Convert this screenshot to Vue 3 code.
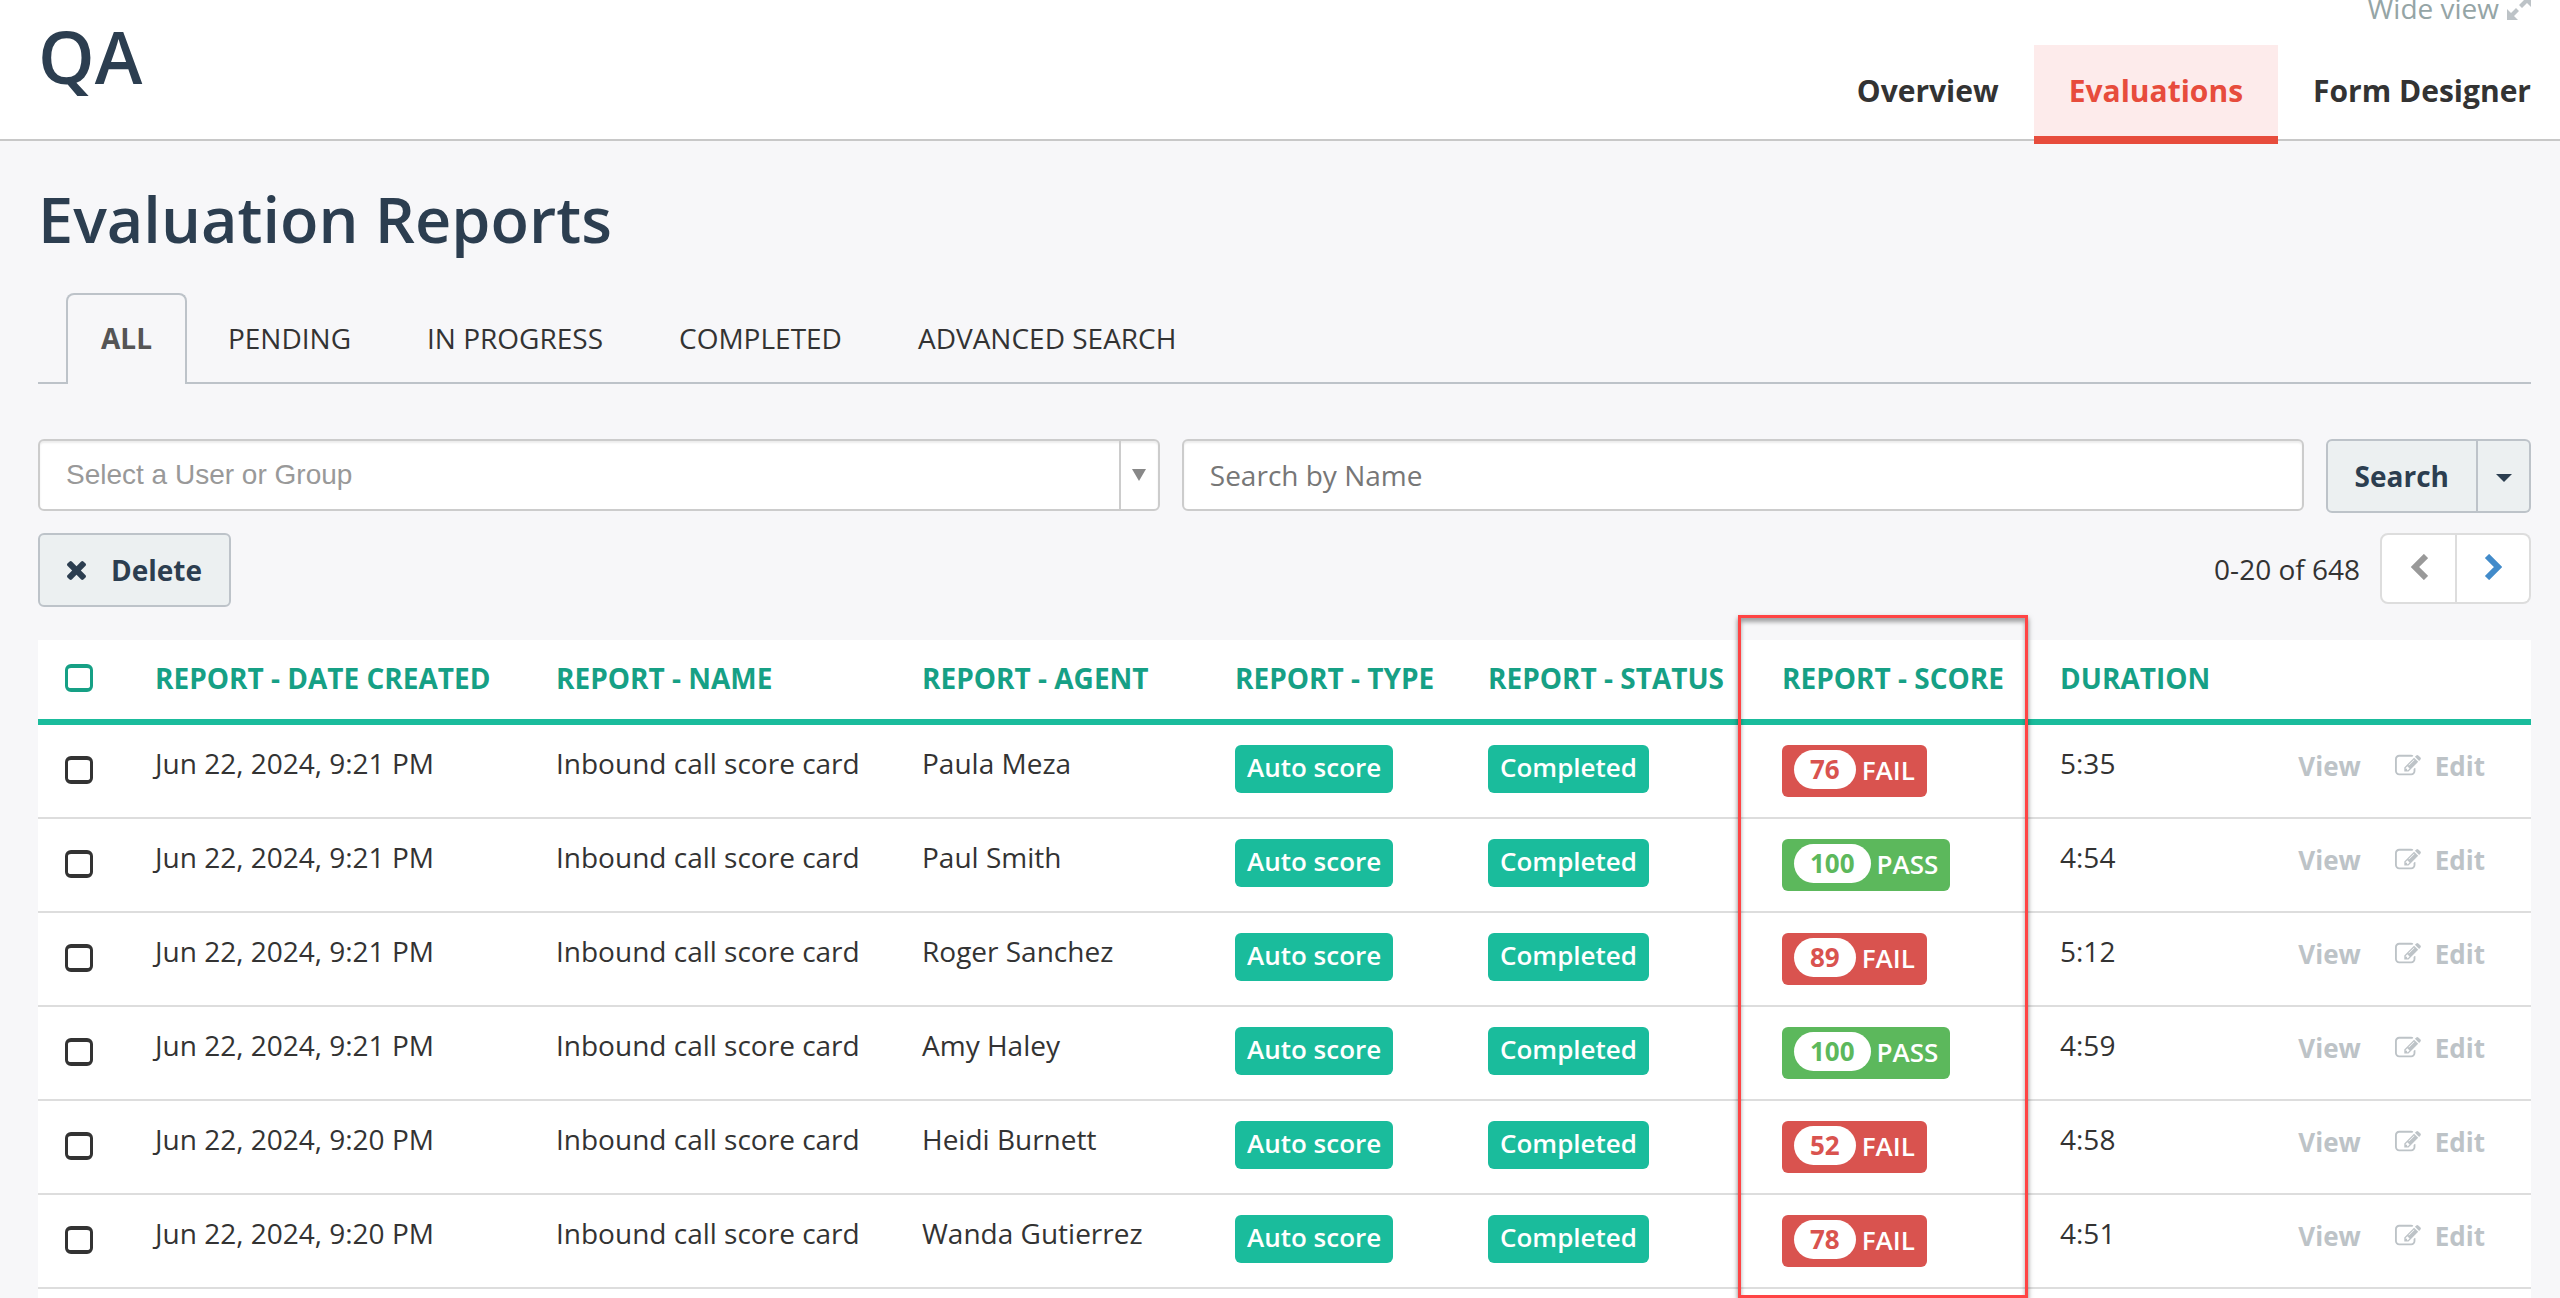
<script setup>
import { ref } from 'vue'

const navItems = ['Overview', 'Evaluations', 'Form Designer']
const activeNav = ref('Evaluations')

const tabs = ['All', 'Pending', 'In progress', 'Completed', 'Advanced search']
const activeTab = ref('All')

const userOrGroup = ref('')
const nameQuery = ref('')

const columns = [
  { key: 'date', label: 'Report - Date created' },
  { key: 'name', label: 'Report - Name' },
  { key: 'agent', label: 'Report - Agent' },
  { key: 'type', label: 'Report - Type' },
  { key: 'status', label: 'Report - Status' },
  { key: 'score', label: 'Report - Score' },
  { key: 'duration', label: 'Duration' },
]

const reports = [
  { date: 'Jun 22, 2024, 9:21 PM', agent: 'Paula Meza', score: 76, pass: false, duration: '5:35' },
  { date: 'Jun 22, 2024, 9:21 PM', agent: 'Paul Smith', score: 100, pass: true, duration: '4:54' },
  { date: 'Jun 22, 2024, 9:21 PM', agent: 'Roger Sanchez', score: 89, pass: false, duration: '5:12' },
  { date: 'Jun 22, 2024, 9:21 PM', agent: 'Amy Haley', score: 100, pass: true, duration: '4:59' },
  { date: 'Jun 22, 2024, 9:20 PM', agent: 'Heidi Burnett', score: 52, pass: false, duration: '4:58' },
  { date: 'Jun 22, 2024, 9:20 PM', agent: 'Wanda Gutierrez', score: 78, pass: false, duration: '4:51' },
]
</script>

<template>
  <div class="page">
    <header class="topbar">
      <h1 class="brand">QA</h1>
      <div class="topbar-side">
        <a href="#" class="wide-view">
          Wide view
          <svg class="expand-icon" viewBox="0 0 24 24" aria-hidden="true">
            <path d="M13 0h11v11l-4-4-5 5-3-3 5-5zM11 24H0V13l4 4 5-5 3 3-5 5z" />
          </svg>
        </a>
        <nav class="main-nav">
          <a
            v-for="item in navItems"
            :key="item"
            href="#"
            class="nav-link"
            :class="{ active: item === activeNav }"
            @click.prevent="activeNav = item"
          >{{ item }}</a>
        </nav>
      </div>
    </header>

    <main class="content">
      <h2 class="title">Evaluation Reports</h2>

      <nav class="tabs">
        <a
          v-for="tab in tabs"
          :key="tab"
          href="#"
          class="tab"
          :class="{ active: tab === activeTab }"
          @click.prevent="activeTab = tab"
        >{{ tab }}</a>
      </nav>

      <form class="filters" @submit.prevent>
        <div class="picker">
          <select v-model="userOrGroup" class="picker-select" aria-label="User or group">
            <option value="">Select a User or Group</option>
          </select>
          <span class="picker-arrow">
            <svg viewBox="0 0 14 12" aria-hidden="true"><path d="M0 0h14L7 12z" /></svg>
          </span>
        </div>
        <input
          v-model="nameQuery"
          class="name-input"
          type="text"
          placeholder="Search by Name"
          aria-label="Search by Name"
        />
        <div class="search-group">
          <button type="submit" class="btn btn-search">Search</button>
          <button type="button" class="btn btn-caret" aria-label="More search options">
            <svg viewBox="0 0 16 8" aria-hidden="true"><path d="M0 0h16L8 8z" /></svg>
          </button>
        </div>
      </form>

      <div class="toolbar">
        <button type="button" class="btn btn-delete">
          <svg viewBox="302 366 1188 1188" aria-hidden="true">
            <path d="M1490 1322q0 40-28 68l-136 136q-28 28-68 28t-68-28l-294-294-294 294q-28 28-68 28t-68-28l-136-136q-28-28-28-68t28-68l294-294-294-294q-28-28-28-68t28-68l136-136q28-28 68-28t68 28l294 294 294-294q28-28 68-28t68 28l136 136q28 28 28 68t-28 68l-294 294 294 294q28 28 28 68z" />
          </svg>
          Delete
        </button>
        <div class="pager">
          <span class="pager-count">0-20 of 648</span>
          <div class="pager-buttons">
            <button type="button" class="pager-btn prev" aria-label="Previous page">
              <svg viewBox="0 0 18 26" aria-hidden="true"><path d="M16 2 5 13l11 11" /></svg>
            </button>
            <button type="button" class="pager-btn next" aria-label="Next page">
              <svg viewBox="0 0 18 26" aria-hidden="true"><path d="m3 2 11 11L3 24" /></svg>
            </button>
          </div>
        </div>
      </div>

      <div class="table-wrap">
        <table class="reports">
          <colgroup>
            <col class="col-check" />
            <col v-for="col in columns" :key="col.key" :class="'col-' + col.key" />
            <col />
          </colgroup>
          <thead>
            <tr>
              <th class="check-cell"><input type="checkbox" class="check" aria-label="Select all reports" /></th>
              <th v-for="col in columns" :key="col.key">{{ col.label }}</th>
              <th></th>
            </tr>
          </thead>
          <tbody>
            <tr v-for="(report, i) in reports" :key="i">
              <td class="check-cell">
                <input type="checkbox" class="check" :aria-label="'Select report for ' + report.agent" />
              </td>
              <td>{{ report.date }}</td>
              <td>Inbound call score card</td>
              <td>{{ report.agent }}</td>
              <td class="label-cell"><span class="label">Auto score</span></td>
              <td class="label-cell"><span class="label">Completed</span></td>
              <td class="label-cell">
                <span class="label score" :class="report.pass ? 'pass' : 'fail'">
                  <span class="badge">{{ report.score }}</span>
                  {{ report.pass ? 'PASS' : 'FAIL' }}
                </span>
              </td>
              <td>{{ report.duration }}</td>
              <td class="actions-cell">
                <div class="actions">
                  <a href="#">View</a>
                  <a href="#" class="edit">
                    <svg viewBox="0 0 1792 1792" aria-hidden="true">
                      <path d="M888 1184l116-116-152-152-116 116v56h96v96h56zm440-720q-16-16-33 1l-350 350q-17 17-1 33t33-1l350-350q17-17 1-33zm80 594v190q0 119-84.5 203.5t-203.5 84.5h-832q-119 0-203.5-84.5t-84.5-203.5v-832q0-119 84.5-203.5t203.5-84.5h832q63 0 117 25 15 7 18 23 3 17-9 29l-49 49q-14 14-32 8-23-6-45-6h-832q-66 0-113 47t-47 113v832q0 66 47 113t113 47h832q66 0 113-47t47-113v-126q0-13 9-22l64-64q15-15 35-7t20 29zm-96-738l288 288-672 672h-288v-288zm444 132l-92 92-288-288 92-92q28-28 68-28t68 28l152 152q28 28 28 68t-28 68z" />
                    </svg>
                    Edit
                  </a>
                </div>
              </td>
            </tr>
          </tbody>
        </table>
        <div class="column-highlight"></div>
      </div>
    </main>
  </div>
</template>

<style>
body {
  background: #f7f7f9;
}
</style>

<style scoped>
.page,
.page * {
  box-sizing: border-box;
}

.page {
  display: flex;
  flex-direction: column;
  min-height: 100vh;
  overflow: hidden;
  font-family: "Open Sans", "Noto Sans", sans-serif;
  font-size: 28px;
  line-height: 40px;
  color: #333;
}

a {
  color: inherit;
  text-decoration: none;
}

.topbar {
  display: flex;
  justify-content: space-between;
  height: 141px;
  padding: 0 29px 0 38px;
  background: #fff;
  border-bottom: 2px solid #c8c8c8;
}

.brand {
  margin: 16px 0 0;
  font-size: 72px;
  font-weight: 600;
  line-height: 80px;
  color: #2c3e50;
}

.topbar-side {
  display: flex;
  flex-direction: column;
  align-items: flex-end;
}

.wide-view {
  display: flex;
  align-items: center;
  gap: 8px;
  height: 40px;
  margin-top: -12px;
  color: #95a5a6;
}

.expand-icon {
  width: 24px;
  height: 24px;
  fill: #bdc3c7;
}

.main-nav {
  display: flex;
  margin-top: 17px;
}

.nav-link {
  height: 99px;
  padding: 26px 35px 0;
  font-size: 30px;
  font-weight: 700;
}

.nav-link:last-child {
  padding-right: 0;
}

.nav-link.active {
  color: #e74c3c;
  background: #fdebeb;
  border-bottom: 8px solid #e74c3c;
}

.content {
  display: flex;
  flex: 1;
  flex-direction: column;
  padding: 0 29px 0 38px;
}

.title {
  margin: 38px 0 34px;
  font-size: 63px;
  font-weight: 600;
  line-height: 80px;
  color: #2c3e50;
}

.tabs {
  display: flex;
  gap: 6px;
  padding-left: 28px;
  text-transform: uppercase;
  border-bottom: 2px solid #bdc3c9;
}

.tab {
  height: 91px;
  margin-bottom: -2px;
  padding: 23px 33px 0;
  border: 2px solid transparent;
  border-bottom: 0;
}

.tab.active {
  font-weight: 700;
  color: #555;
  background: #f7f7f9;
  border-color: #bdc3c9;
  border-radius: 8px 8px 0 0;
}

.filters {
  display: grid;
  grid-template-columns: 1fr 1fr auto;
  gap: 22px;
  align-items: start;
  margin-top: 55px;
}

.picker,
.name-input {
  min-width: 0;
  height: 72px;
  background: #fff;
  border: 2px solid #ccc;
  border-radius: 6px;
  box-shadow: inset 0 2px 2px rgba(0, 0, 0, 0.08);
}

.picker {
  display: flex;
}

.picker-select {
  flex: 1;
  min-width: 0;
  padding: 0 26px 2px;
  font: 28px "Liberation Sans", Arial, sans-serif;
  color: #999;
  appearance: none;
  background: none;
  border: 0;
}

.picker-arrow {
  display: flex;
  align-items: center;
  justify-content: center;
  width: 39px;
  border-left: 2px solid #ccc;
}

.picker-arrow svg {
  width: 14px;
  height: 12px;
  fill: #888;
}

.name-input {
  padding: 0 26px;
  font: inherit;
  color: #333;
}

.name-input::placeholder {
  color: #777;
  opacity: 1;
}

.search-group {
  display: flex;
}

.btn {
  display: flex;
  align-items: center;
  justify-content: center;
  height: 74px;
  padding: 0 27px;
  font: inherit;
  font-weight: 700;
  color: #2c3e50;
  background: #ecf0f1;
  border: 2px solid #bdc3c9;
  border-radius: 6px;
}

.btn-search {
  border-radius: 6px 0 0 6px;
}

.btn-caret {
  width: 53px;
  padding: 4px 0 0;
  border-left: 0;
  border-radius: 0 6px 6px 0;
}

.btn-caret svg {
  width: 16px;
  height: 8px;
  fill: #2c3e50;
}

.toolbar {
  display: flex;
  align-items: flex-start;
  justify-content: space-between;
  margin-top: 20px;
}

.btn-delete {
  gap: 25px;
}

.btn-delete svg {
  width: 19px;
  height: 19px;
  fill: #2c3e50;
}

.pager {
  display: flex;
  gap: 20px;
  align-items: center;
}

.pager-buttons {
  display: flex;
}

.pager-btn {
  display: flex;
  align-items: center;
  justify-content: center;
  height: 71px;
  padding: 0 0 4px;
  background: #fff;
  border: 2px solid #ddd;
}

.pager-btn svg {
  width: 18px;
  height: 26px;
  fill: none;
  stroke: #999;
  stroke-width: 6;
}

.pager-btn.prev {
  width: 77px;
  border-radius: 8px 0 0 8px;
}

.pager-btn.next {
  width: 74px;
  border-left: 0;
  border-radius: 0 8px 8px 0;
}

.pager-btn.next svg {
  stroke: #428bca;
}

.table-wrap {
  position: relative;
  flex: 1;
  margin-top: 33px;
  background: #fff;
}

.reports {
  width: 100%;
  table-layout: fixed;
  border-spacing: 0;
}

.col-check {
  width: 117px;
}

.col-date {
  width: 401px;
}

.col-name {
  width: 366px;
}

.col-agent {
  width: 313px;
}

.col-type {
  width: 253px;
}

.col-status {
  width: 294px;
}

.col-score {
  width: 278px;
}

.col-duration {
  width: 160px;
}

.reports th {
  height: 85px;
  padding: 18px 0 0;
  font-weight: 700;
  color: #16a085;
  text-align: left;
  text-transform: uppercase;
  white-space: nowrap;
  vertical-align: top;
  border-bottom: 6px solid #1abc9c;
}

.reports td {
  height: 94px;
  padding: 18px 0 0;
  vertical-align: top;
  border-bottom: 2px solid #ddd;
}

.reports .check-cell {
  padding: 24px 0 0 27px;
}

.reports td.check-cell {
  padding-top: 31px;
}

.reports .label-cell {
  padding-top: 20px;
}

.check {
  display: block;
  width: 28px;
  height: 28px;
  margin: 0;
  appearance: none;
  border: solid #333;
  border-width: 4px 3px;
  border-radius: 6px;
}

th .check {
  border-color: #16a085;
}

.label {
  display: inline-block;
  height: 48px;
  padding: 0 12px;
  font-size: 26px;
  font-weight: 600;
  line-height: 44px;
  color: #fff;
  white-space: nowrap;
  vertical-align: top;
  background: #1abc9c;
  border-radius: 6px;
}

.label.score {
  display: inline-flex;
  gap: 6px;
  height: 52px;
  line-height: 50px;
}

.score.fail {
  background: #d9534f;
}

.score.pass {
  background: #5cb85c;
}

.badge {
  height: 39px;
  margin-top: 5px;
  padding: 0 16px;
  font-weight: 700;
  line-height: 38px;
  background: #fff;
  border-radius: 20px;
}

.fail .badge {
  color: #d9534f;
}

.pass .badge {
  color: #5cb85c;
}

.reports .actions-cell {
  padding: 22px 46px 0 0;
}

.actions {
  display: flex;
  gap: 34px;
  justify-content: flex-end;
  font-size: 26px;
  font-weight: 700;
  line-height: 38px;
  color: #bdc3c7;
}

.edit {
  display: flex;
  gap: 14px;
}

.edit svg {
  width: 26px;
  height: 26px;
  margin-top: 6px;
  fill: #bdc3c7;
}

/* Callout frame drawn over the score column */
.column-highlight {
  position: absolute;
  top: -25px;
  bottom: 0;
  left: 1700px;
  width: 290px;
  pointer-events: none;
  border: 3px solid #ff4444;
  box-shadow: 0 3px 5px rgba(0, 0, 0, 0.5), inset 0 4px 4px rgba(0, 0, 0, 0.35);
}
</style>
